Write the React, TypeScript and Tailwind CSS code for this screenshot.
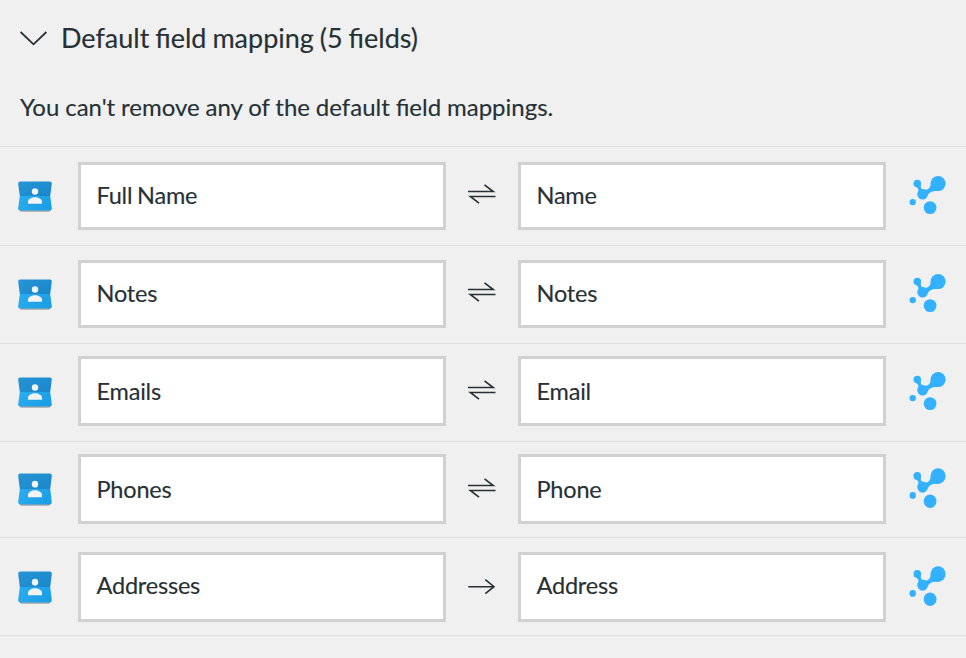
type Direction = 'both' | 'right';

// The rows do not share one height, so each keeps its own measurements
const fields: {
  from: string;
  to: string;
  direction: Direction;
  row: string;
  box: string;
  contacts: string;
  arrow: string;
  dots: string;
}[] = [
  {
    from: 'Full Name',
    to: 'Name',
    direction: 'both',
    row: 'h-[99px] pt-[15px]',
    box: 'h-[68px] pb-[2px]',
    contacts: 'mt-[18px] h-[32px]',
    arrow: 'mt-[22px]',
    dots: 'mt-[13px] h-[40px]',
  },
  {
    from: 'Notes',
    to: 'Notes',
    direction: 'both',
    row: 'h-[98px] pt-[14px]',
    box: 'h-[68px] pb-[2px]',
    contacts: 'mt-[18px] h-[32px]',
    arrow: 'mt-[22px]',
    dots: 'mt-[13px] h-[40px]',
  },
  {
    from: 'Emails',
    to: 'Email',
    direction: 'both',
    row: 'h-[98px] pt-[12px]',
    box: 'h-[70px]',
    contacts: 'mt-[20px] h-[32px]',
    arrow: 'mt-[24px]',
    dots: 'mt-[15px] h-[40px]',
  },
  {
    from: 'Phones',
    to: 'Phone',
    direction: 'both',
    row: 'h-[96px] pt-[12px]',
    box: 'h-[70px]',
    contacts: 'mt-[18px] h-[34px]',
    arrow: 'mt-[24px]',
    dots: 'mt-[13px] h-[42px]',
  },
  {
    from: 'Addresses',
    to: 'Address',
    direction: 'right',
    row: 'h-[98px] pt-[14px]',
    box: 'h-[70px] pb-[4px]',
    contacts: 'mt-[18px] h-[34px]',
    arrow: 'mt-[25px]',
    dots: 'mt-[13px] h-[42px]',
  },
];

function ContactsIcon({ className }: { className: string }) {
  return (
    <svg viewBox="0 0 36 32" preserveAspectRatio="none" className={`w-[36px] shrink-0 ${className}`}>
      <defs>
        <linearGradient id="contactsTop" x1="0" y1="0" x2="1" y2="1">
          <stop offset="0" stopColor="#2595d5" />
          <stop offset="1" stopColor="#1a86cb" />
        </linearGradient>
        <linearGradient id="contactsBottom" x1="0" y1="0" x2="1" y2="0.4">
          <stop offset="0" stopColor="#29adf0" />
          <stop offset="1" stopColor="#1d9fe6" />
        </linearGradient>
      </defs>
      <path d="M2 28.5Q2.4 31.7 4.5 31.7H31.5Q33.6 31.7 34 28.5Z" fill="#000" opacity="0.3" />
      <path d="M2.8 16H33.2L34.8 28.2Q35 30.5 32.8 30.5H3.2Q1 30.5 1.2 28.2Z" fill="url(#contactsBottom)" />
      <path d="M3.2 1.5H32.8Q35 1.5 34.8 3.8L33.2 16H2.8L1.2 3.8Q1 1.5 3.2 1.5Z" fill="url(#contactsTop)" />
      <circle cx="18" cy="11.5" r="3.2" fill="#f1f3f5" />
      <path d="M11 23.7V21.6C11 18.8 15 17.2 18 17.2S25 18.8 25 21.6V23.7Z" fill="#f1f3f5" />
    </svg>
  );
}

function DotsIcon({ className }: { className: string }) {
  return (
    <svg viewBox="0 0 38 40" preserveAspectRatio="none" className={`w-[38px] shrink-0 ${className}`} fill="#33b1ff">
      <circle cx="30.1" cy="8.6" r="7.5" />
      <circle cx="9.3" cy="8.6" r="3.8" />
      <circle cx="14.6" cy="19.2" r="5.3" />
      <circle cx="4.7" cy="27.1" r="3.2" />
      <circle cx="22.1" cy="32.6" r="6.4" />
      <path d="M13 9.6C12 13 14 14.8 17 14.8C21 14.8 22.6 12.4 22.8 8L30 16.1C24.5 15.4 21 17.5 19.8 20.2L9.4 18.4C11.3 16 10.8 14 8.7 12.2Z" />
    </svg>
  );
}

function ArrowIcon({ direction, className }: { direction: Direction; className: string }) {
  return (
    <svg
      viewBox="0 0 28 20"
      className={`h-[20px] w-[28px] shrink-0 ${className}`}
      fill="none"
      stroke="#263035"
      strokeWidth="1.6"
    >
      {direction === 'both' ? (
        <path d="M0 7.5H25.2L16.5.8M27.5 12.5H2.3L11 19.2" />
      ) : (
        <path d="M.3 9.7H26M17.3 2.7L26 9.7L17.3 16.7" />
      )}
    </svg>
  );
}

function FieldBox({ label, className }: { label: string; className: string }) {
  return (
    <div
      className={`flex w-[368px] shrink-0 items-center border-[3px] border-[#d1d1d1] bg-white pl-[15.5px] text-[23.5px] leading-[30px] tracking-[-0.2px] [word-spacing:-1px] ${className}`}
    >
      {label}
    </div>
  );
}

export default function App() {
  return (
    <div className="h-[658px] w-[966px] overflow-hidden bg-[#f0f0f0] font-['Lato',sans-serif] text-[#263035] [-webkit-text-stroke:0.15px_#263035]">
      <header className="h-[146px] pl-[20px]">
        <div className="flex h-[76px] items-center gap-[14px]">
          <svg viewBox="0 0 27 15" className="h-[15px] w-[27px]" fill="none" stroke="currentColor" strokeWidth="1.8">
            <path d="M.6 1L13.5 13.3L26.4 1" />
          </svg>
          <h2 className="text-[27px] leading-[34px] [word-spacing:-1px]">Default field mapping (5 fields)</h2>
        </div>
        <p className="pt-[16px] text-[24px] leading-[30px] [word-spacing:-0.3px]">
          You can't remove any of the default field mappings.
        </p>
      </header>

      <ul className="border-b border-[#dfdfdf]">
        {fields.map((field) => (
          <li key={field.from} className={`flex items-start border-t border-[#dfdfdf] pl-[17px] ${field.row}`}>
            <ContactsIcon className={field.contacts} />
            <FieldBox label={field.from} className={`ml-[25px] ${field.box}`} />
            <ArrowIcon direction={field.direction} className={`mx-[22px] ${field.arrow}`} />
            <FieldBox label={field.to} className={field.box} />
            <DotsIcon className={`ml-[22px] ${field.dots}`} />
          </li>
        ))}
      </ul>
    </div>
  );
}
